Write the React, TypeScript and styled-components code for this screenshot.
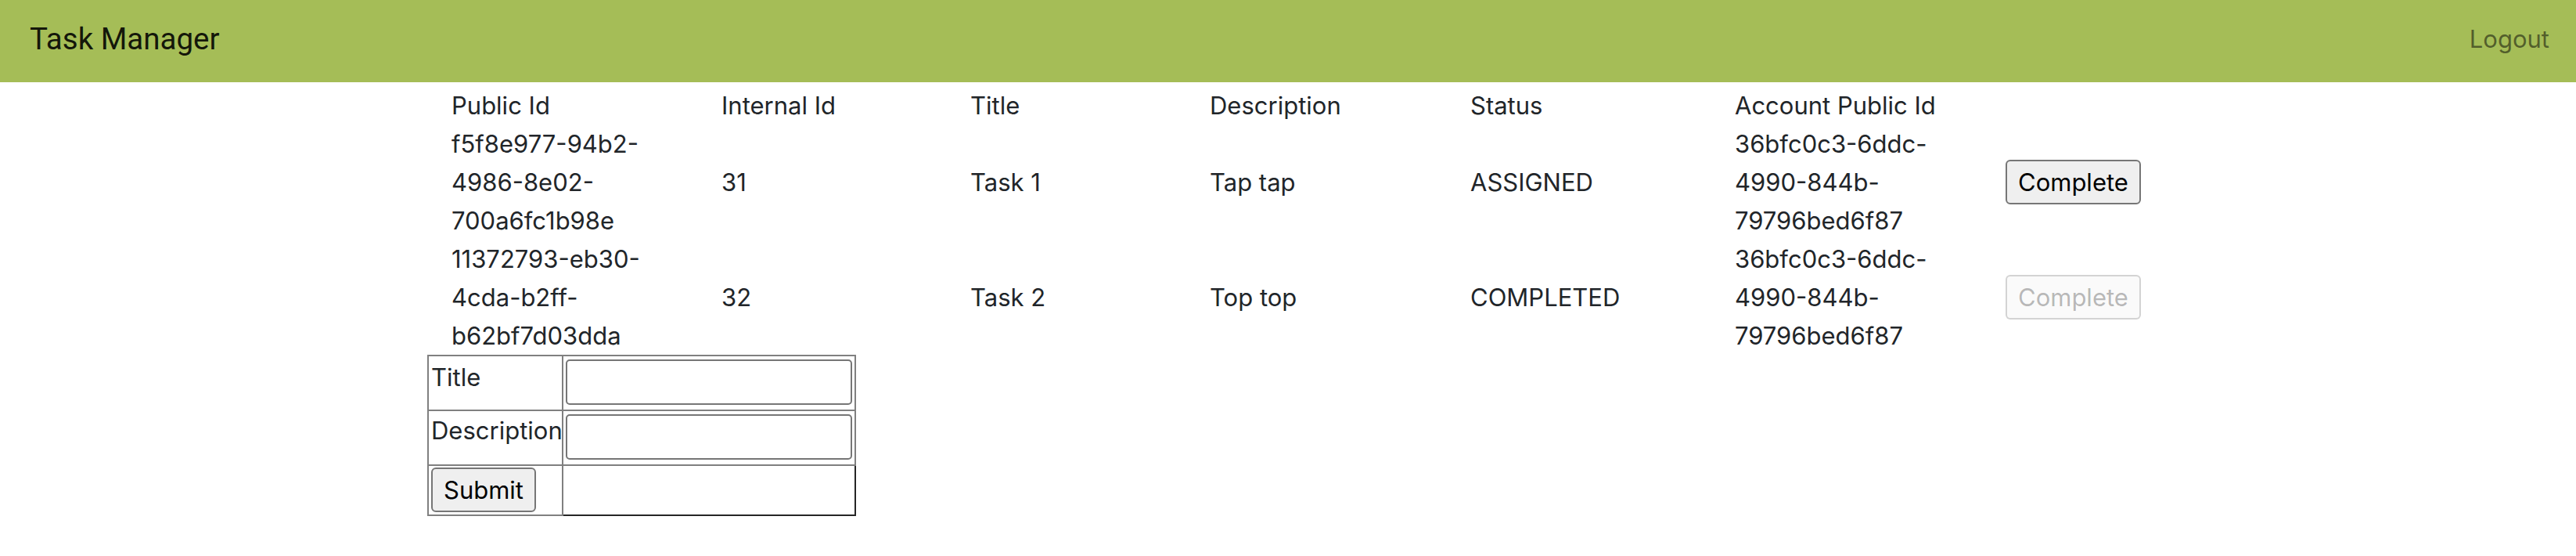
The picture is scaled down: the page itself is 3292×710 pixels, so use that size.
import React from 'react';
import styled, { createGlobalStyle } from 'styled-components';

const GlobalStyle = createGlobalStyle`
  html, body { margin: 0; padding: 0; background: #ffffff; }
  body {
    font-family: Inter, "Liberation Sans", sans-serif;
    color: #212529;
    font-size: 31px;
    line-height: 49px;
  }
`;

const Header = styled.header`
  display: flex;
  align-items: center;
  justify-content: space-between;
  height: 105px;
  box-sizing: border-box;
  padding: 0 34px 6px 38px;
  background: #a5bd57;
`;

const Brand = styled.span`
  font-family: Roboto, "Liberation Sans", sans-serif;
  font-size: 38.5px;
  line-height: normal;
  color: rgba(0, 0, 0, 0.9);
`;

const NavLink = styled.a`
  font-size: 31px;
  line-height: normal;
  color: rgba(0, 0, 0, 0.5);
  text-decoration: none;
  cursor: pointer;
`;

const Main = styled.main`
  padding-left: 546px;
`;

const TaskTable = styled.table`
  margin: 5px 0 0 31px;
  border-collapse: collapse;
  table-layout: fixed;
  width: 2166px;
`;

const Col = styled.col<{ $w: number }>`
  width: ${(p) => p.$w}px;
`;

const HeadCell = styled.th`
  padding: 0 40px 0 0;
  text-align: left;
  font-weight: 400;
  vertical-align: middle;
`;

const Cell = styled.td`
  padding: 0 40px 0 0;
  vertical-align: middle;
`;

const ActionButton = styled.button`
  font-family: inherit;
  font-size: 31px;
  line-height: normal;
  padding: 8px 14px;
  border: 2px solid #767676;
  border-radius: 6px;
  background: #efefef;
  color: #000000;
  cursor: pointer;

  &:disabled {
    cursor: default;
    color: rgba(16, 16, 16, 0.3);
    border-color: rgba(118, 118, 118, 0.3);
    background: rgba(239, 239, 239, 0.3);
  }
`;

const FormTable = styled.table`
  margin-top: 0;
  border-collapse: collapse;
  border: 2px solid #808080;
  table-layout: fixed;
  width: 546px;
`;

const FormCell = styled.td<{ $pad: string; $dark?: boolean }>`
  border: 2px solid #808080;
  padding: ${(p) => p.$pad};
  vertical-align: top;
  white-space: nowrap;
  ${(p) => (p.$dark ? 'border-right-color: #262626; border-bottom-color: #262626;' : '')}
`;

const TextInput = styled.input`
  display: block;
  width: 100%;
  height: 58px;
  box-sizing: border-box;
  border: 2px solid #767676;
  border-radius: 5px;
  font-family: inherit;
  font-size: 26px;
  padding: 2px 6px;
  background: #ffffff;
`;

type Task = {
  publicId: string;
  internalId: number;
  title: string;
  description: string;
  status: string;
  accountPublicId: string;
};

const tasks: Task[] = [
  {
    publicId: 'f5f8e977-94b2-4986-8e02-700a6fc1b98e',
    internalId: 31,
    title: 'Task 1',
    description: 'Tap tap',
    status: 'ASSIGNED',
    accountPublicId: '36bfc0c3-6ddc-4990-844b-79796bed6f87',
  },
  {
    publicId: '11372793-eb30-4cda-b2ff-b62bf7d03dda',
    internalId: 32,
    title: 'Task 2',
    description: 'Top top',
    status: 'COMPLETED',
    accountPublicId: '36bfc0c3-6ddc-4990-844b-79796bed6f87',
  },
];

const columns = [
  { label: 'Public Id', w: 345 },
  { label: 'Internal Id', w: 318 },
  { label: 'Title', w: 306 },
  { label: 'Description', w: 333 },
  { label: 'Status', w: 338 },
  { label: 'Account Public Id', w: 346 },
  { label: '', w: 180 },
];

function Uuid({ value }: { value: string }) {
  const parts = value.split('-');
  return (
    <>
      {parts.map((part, i) => (
        <React.Fragment key={i}>
          {part}
          {i < parts.length - 1 ? (
            <>
              -<wbr />
            </>
          ) : null}
        </React.Fragment>
      ))}
    </>
  );
}

export default function App() {
  return (
    <>
      <GlobalStyle />
      <Header>
        <Brand>Task Manager</Brand>
        <NavLink>Logout</NavLink>
      </Header>
      <Main>
        <TaskTable>
          <colgroup>
            {columns.map((c, i) => (
              <Col key={i} $w={c.w} />
            ))}
          </colgroup>
          <thead>
            <tr>
              {columns.map((c, i) => (
                <HeadCell key={i}>{c.label}</HeadCell>
              ))}
            </tr>
          </thead>
          <tbody>
            {tasks.map((t) => (
              <tr key={t.publicId}>
                <Cell>
                  <Uuid value={t.publicId} />
                </Cell>
                <Cell>{t.internalId}</Cell>
                <Cell>{t.title}</Cell>
                <Cell>{t.description}</Cell>
                <Cell>{t.status}</Cell>
                <Cell>
                  <Uuid value={t.accountPublicId} />
                </Cell>
                <Cell>
                  <ActionButton disabled={t.status === 'COMPLETED'}>Complete</ActionButton>
                </Cell>
              </tr>
            ))}
          </tbody>
        </TaskTable>
        <FormTable>
          <colgroup>
            <Col $w={172} />
            <Col $w={374} />
          </colgroup>
          <tbody>
            <tr>
              <FormCell $pad="2px 3px 0 3px">Title</FormCell>
              <FormCell $pad="4px 3px 6px 3px">
                <TextInput type="text" />
              </FormCell>
            </tr>
            <tr>
              <FormCell $pad="0 3px 0 3px">Description</FormCell>
              <FormCell $pad="4px 3px 6px 3px">
                <TextInput type="text" />
              </FormCell>
            </tr>
            <tr>
              <FormCell $pad="2px 3px 3px 3px">
                <ActionButton type="submit">Submit</ActionButton>
              </FormCell>
              <FormCell $pad="2px 3px" $dark />
            </tr>
          </tbody>
        </FormTable>
      </Main>
    </>
  );
}
